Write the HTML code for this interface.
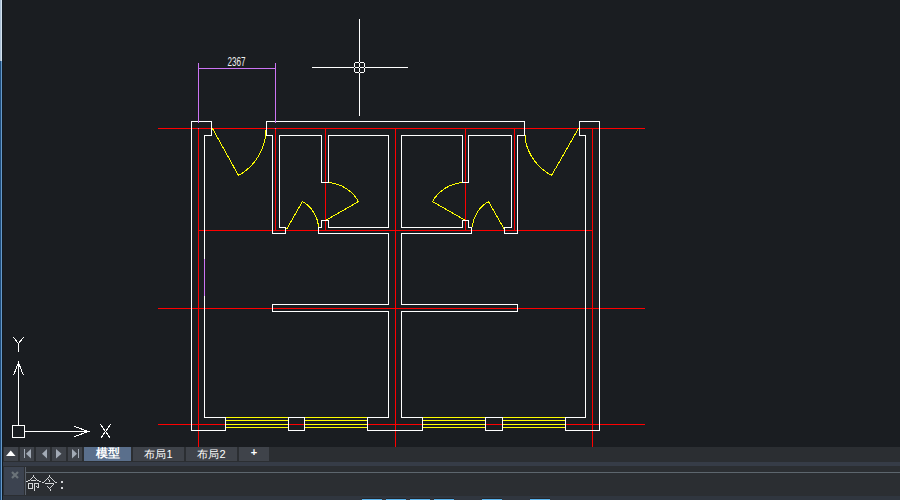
<!DOCTYPE html>
<html><head><meta charset="utf-8">
<style>
html,body{margin:0;padding:0;width:900px;height:500px;overflow:hidden;background:#1a1d21;font-family:"Liberation Sans",sans-serif;}
.a{position:absolute;}
svg{position:absolute;left:0;top:0;}
.tb{position:absolute;top:447px;height:14px;background:#3f434a;color:#fff;font-size:11px;line-height:14px;text-align:center;}
</style></head><body>
<div class="a" style="left:0;top:0;width:900px;height:447px;background:#1a1d21"></div>
<svg width="900" height="447" viewBox="0 0 900 447" shape-rendering="crispEdges">
<g transform="translate(0.5,0.5)" fill="none" stroke-width="1" stroke-linecap="square">
<g stroke="#ff0000">
<path d="M158,128H644M198,230H592M158,308H644M158,424H644"/>
<path d="M198,128V446M275,128V230M325,128V230M395,128V446M465,128V230M514,128V230M592,128V446"/>
</g>
<g stroke="#ffff00">
<path d="M225,417H288M304,417H367M225,420H288M304,420H367M225,424H288M304,424H367M225,427H288M304,427H367" stroke-linecap="butt"/>
<path d="M422,417H485M502,417H565M422,420H485M502,420H565M422,424H485M502,424H565M422,427H485M502,427H565" stroke-linecap="butt"/>
</g>
<g stroke="#ffff00" stroke-linecap="butt">
<path d="M212,128L238,175A54,54 0 0,0 265,136L265,129"/>
<path d="M286,229L302,201A32,32 0 0,1 318,227"/>
<path d="M328,182A38,38 0 0,1 358,201L325,220"/>
<path d="M578,128L551,175A54,54 0 0,1 525,141L525,134"/>
<path d="M504,229L488,201A32,32 0 0,0 472,227"/>
<path d="M462,182A38,38 0 0,0 432,201L465,220"/>
</g>
<g stroke="#ffffff">
<path d="M191,121H211V135H204V417H225V430H191Z"/>
<path d="M599,121H579V135H585V417H565V430H599Z"/>
<path d="M288,417H304V430H288Z"/>
<path d="M485,417H502V430H485Z"/>
<path d="M266,121H524V135H517V233H504V227H511V135H468V182H462V135H401V227H462V220H468V227H471V233H401V304H517V311H401V417H422V430H367V417H388V311H272V304H388V233H318V227H321V220H328V227H388V135H328V182H321V135H279V227H285V233H272V135H266Z"/>
</g>

<g stroke="#cc74f4">
<path d="M198,63V122M275,63V122M198,68H275M204,259V295"/>
</g>
<g stroke="#ffffff">
<path d="M359,19V115M312,67H407"/>
<path d="M355,62H363M355,72H363M354,63V71M364,63V71"/>
</g>
<g stroke="#ffffff">
<path d="M18,362V425M24,431H87"/>
<path d="M13,375L18,362L23,375M74,426L88,431L74,436" stroke-linecap="butt"/>
<path d="M12,425H24V437H12Z"/>
<path d="M100,424L110,438M110,424L100,438" stroke-linecap="butt"/>
<path d="M13,337L18,343L23,337M18,343V351" stroke-linecap="butt"/>
</g>
</g>
<rect x="198" y="128" width="1" height="1" fill="#b48cf0"/><rect x="275" y="128" width="1" height="1" fill="#b48cf0"/>
<g fill="#0e1012"><rect x="359" y="62" width="1" height="1"/><rect x="359" y="72" width="1" height="1"/><rect x="354" y="67" width="1" height="1"/><rect x="364" y="67" width="1" height="1"/><rect x="359" y="67" width="1" height="1"/></g>
<text x="227.5" y="66" fill="#f0f0f0" font-size="13.5" font-family="Liberation Sans" transform="translate(227.5,66) scale(0.6,1) translate(-227.5,-66)">2367</text>
</svg>
<!-- left strip -->
<div class="a" style="left:0;top:0;width:1px;height:61px;background:#a9bed3"></div>
<div class="a" style="left:1px;top:0;width:1px;height:61px;background:#d3e1ee"></div>
<div class="a" style="left:0;top:61px;width:1px;height:439px;background:#1f4d7c"></div>
<div class="a" style="left:1px;top:61px;width:1px;height:439px;background:#6699c9"></div>
<div class="a" style="left:2px;top:0;width:1px;height:500px;background:#121a22"></div>
<!-- tab bar -->
<div class="a" style="left:3px;top:447px;width:897px;height:15px;background:#2b2e32"></div>
<div class="a" style="left:3px;top:462px;width:897px;height:4px;background:#363c47"></div>
<div class="a" style="left:3px;top:466px;width:897px;height:30px;background:#2b2e32"></div>
<div class="a" style="left:3px;top:496px;width:897px;height:4px;background:#30363f"></div>
<div class="tb" style="left:4px;width:14px;"></div>
<div class="tb" style="left:20px;width:14px;"></div>
<div class="tb" style="left:36px;width:14px;"></div>
<div class="tb" style="left:52px;width:14px;"></div>
<div class="tb" style="left:68px;width:14px;"></div>
<div class="tb" style="left:84px;width:47px;background:#5a6f8c;font-weight:bold;font-size:11.5px;line-height:13px">模型</div>
<div class="tb" style="left:133px;width:51px;font-size:11px;line-height:14px">布局1</div>
<div class="tb" style="left:186px;width:51px;font-size:11px;line-height:14px">布局2</div>
<div class="tb" style="left:239px;width:30px;font-weight:bold;font-size:11px;line-height:10px">+</div>
<svg width="900" height="500" viewBox="0 0 900 500" style="pointer-events:none">
<polygon points="6,456 15.5,456 10.75,450.5" fill="#ffffff"/>
<rect x="24" y="449" width="1" height="9" fill="#a3abb6"/>
<polygon points="31,449 31,458.5 26,453.75" fill="#a3abb6"/>
<polygon points="47,449 47,458.5 42,453.75" fill="#a3abb6"/>
<polygon points="56,449 56,458.5 61.5,453.75" fill="#a3abb6"/>
<polygon points="72,449 72,458.5 77,453.75" fill="#a3abb6"/>
<rect x="78" y="449" width="1" height="9" fill="#a3abb6"/>
</svg>
<!-- command line -->
<div class="a" style="left:4px;top:467px;width:20px;height:28px;background:#3c4350"></div>
<svg width="900" height="500" viewBox="0 0 900 500" style="pointer-events:none">
<path d="M12,472L18,478M18,472L12,478" stroke="#6b7379" stroke-width="2.2"/>
</svg>
<div class="a" style="left:25px;top:467px;width:1px;height:28px;background:#59606a"></div>
<div class="a" style="left:26px;top:472px;width:874px;height:1px;background:#5d666e"></div>
<svg width="900" height="500" viewBox="0 0 900 500" style="pointer-events:none" shape-rendering="crispEdges"><path fill="#d4d6d8" d="M33,475h1v1h-1zM49,475h1v1h-1zM33,476h1v1h-1zM49,476h1v1h-1zM32,477h1v1h-1zM34,477h1v1h-1zM48,477h1v1h-1zM50,477h1v1h-1zM31,478h1v1h-1zM35,478h1v1h-1zM47,478h1v1h-1zM51,478h1v1h-1zM30,479h1v1h-1zM36,479h1v1h-1zM46,479h1v1h-1zM48,479h1v1h-1zM52,479h1v1h-1zM28,480h2v1h-2zM31,480h5v1h-5zM37,480h2v1h-2zM45,480h1v1h-1zM49,480h1v1h-1zM53,480h1v1h-1zM26,481h2v1h-2zM39,481h2v1h-2zM44,481h1v1h-1zM49,481h1v1h-1zM54,481h1v1h-1zM61,481h2v1h-2zM42,482h2v1h-2zM55,482h2v1h-2zM61,482h2v1h-2zM28,483h5v1h-5zM34,483h5v1h-5zM45,483h9v1h-9zM28,484h1v1h-1zM32,484h1v1h-1zM34,484h1v1h-1zM38,484h1v1h-1zM53,484h1v1h-1zM28,485h1v1h-1zM32,485h1v1h-1zM34,485h1v1h-1zM38,485h1v1h-1zM52,485h1v1h-1zM28,486h1v1h-1zM32,486h1v1h-1zM34,486h1v1h-1zM36,486h1v1h-1zM38,486h1v1h-1zM47,486h1v1h-1zM51,486h1v1h-1zM28,487h1v1h-1zM32,487h1v1h-1zM34,487h1v1h-1zM37,487h2v1h-2zM48,487h1v1h-1zM50,487h1v1h-1zM61,487h2v1h-2zM28,488h5v1h-5zM34,488h1v1h-1zM49,488h1v1h-1zM61,488h2v1h-2zM34,489h1v1h-1zM50,489h1v1h-1zM34,490h1v1h-1zM50,490h1v1h-1z"/></svg>
<div class="a" style="left:362px;top:498px;width:20px;height:2px;background:#5ab4ee;border-top:1px solid #22262b;box-sizing:border-box"></div>
<div class="a" style="left:386px;top:498px;width:20px;height:2px;background:#5ab4ee;border-top:1px solid #22262b;box-sizing:border-box"></div>
<div class="a" style="left:410px;top:498px;width:20px;height:2px;background:#5ab4ee;border-top:1px solid #22262b;box-sizing:border-box"></div>
<div class="a" style="left:434px;top:498px;width:20px;height:2px;background:#5ab4ee;border-top:1px solid #22262b;box-sizing:border-box"></div>
<div class="a" style="left:482px;top:498px;width:20px;height:2px;background:#5ab4ee;border-top:1px solid #22262b;box-sizing:border-box"></div>
<div class="a" style="left:530px;top:498px;width:20px;height:2px;background:#5ab4ee;border-top:1px solid #22262b;box-sizing:border-box"></div>
</body></html>
